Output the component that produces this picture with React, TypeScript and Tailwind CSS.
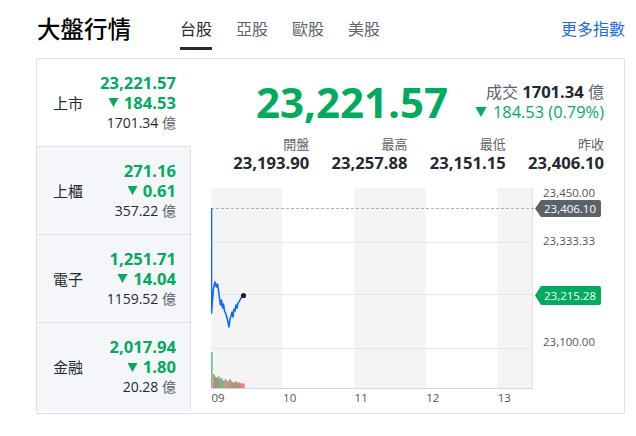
import React from "react";

const GREEN = "#00ab5e";

const Tri = ({ w, h }: { w: number; h: number }) => (
  <svg width={w} height={h} viewBox="0 0 10 9" className="block shrink-0">
    <path d="M0 0H10L5 9Z" fill={GREEN} />
  </svg>
);

const rows = [
  { name: "上市", v: "23,221.57", c: "184.53", amt: "1701.34", active: true },
  { name: "上櫃", v: "271.16", c: "0.61", amt: "357.22" },
  { name: "電子", v: "1,251.71", c: "14.04", amt: "1159.52" },
  { name: "金融", v: "2,017.94", c: "1.80", amt: "20.28" },
];

const stats = [
  { l: "開盤", v: "23,193.90" },
  { l: "最高", v: "23,257.88" },
  { l: "最低", v: "23,151.15" },
  { l: "昨收", v: "23,406.10" },
];

const pricePath =
  "M211.5 208 L211.5 313 L212.5 300 L213.5 288 L215 282 L216.5 287 L217.5 284 L218.5 290 L219.5 298 L220.5 305 L221.5 300 L222.5 308 L223.5 304 L224.5 311 L226 314 L227 318 L228 322 L229 327 L230 319 L231 316 L232 312 L233 317 L234 309 L235 311 L236 305 L237 308 L238 303 L239 302 L240 300 L241 298 L243 295.5";

const volTops = [374, 375, 377, 377, 378, 376, 379, 378, 378, 381, 380, 380, 379, 381, 382, 380, 379, 381, 382, 382, 383, 381, 382, 383, 382, 383, 383, 384, 383, 384];
const volCols = "rrgrggrgrggrrgrrgrrgrrgrrgrrrr";

const bands = [211, 282.6, 354.1, 425.7, 497.2, 533];
const hourLabels = ["09", "10", "11", "12", "13"];

function Chart() {
  const tf = "'Open Sans', sans-serif";
  return (
    <svg width={393} height={240} viewBox="211 173 393 240" className="block">
      {bands.slice(0, 5).map((x, i) => (
        <rect key={i} x={x} y={188} width={bands[i + 1] - x} height={200} fill={i % 2 === 0 ? "#f4f4f4" : "#ffffff"} />
      ))}
      {[242, 294, 348].map((y) => (
        <line key={y} x1={211} x2={533} y1={y + 0.5} y2={y + 0.5} stroke="#e6e6e6" strokeWidth={1} />
      ))}
      <line x1={211} x2={533} y1={388.5} y2={388.5} stroke="#d6d6d6" strokeWidth={1} />
      <line x1={532.5} x2={532.5} y1={188} y2={389} stroke="#e2e2e2" strokeWidth={1} />
      <line x1={211} x2={535} y1={208.5} y2={208.5} stroke="#b0b0b0" strokeWidth={1} strokeDasharray="3 2" />
      <rect x={211.2} y={352} width={1.4} height={36} fill="#4cbf86" />
      {volTops.map((t, i) => (
        <rect
          key={i}
          x={212.8 + i * 1.05}
          y={t}
          width={1.3}
          height={388 - t}
          fill={volCols[i] === "r" ? "#e86a6a" : "#2fb872"}
          opacity={0.85}
        />
      ))}
      <path d={pricePath} fill="none" stroke="#0f69ff" strokeWidth={1.6} strokeLinejoin="round" />
      <circle cx={243.5} cy={295.5} r={2.6} fill="#222" />
      <text x={543} y={197} fontSize={11.5} fill="#555" fontFamily={tf}>23,450.00</text>
      <text x={543} y={245} fontSize={11.5} fill="#555" fontFamily={tf}>23,333.33</text>
      <text x={543} y={346} fontSize={11.5} fill="#555" fontFamily={tf}>23,100.00</text>
      <path d="M535 208.5 L541 200 H599 Q601 200 601 202 V215 Q601 217 599 217 H541 Z" fill="#5b636a" />
      <text x={544} y={212.7} fontSize={11.5} fill="#fff" fontFamily={tf}>23,406.10</text>
      <path d="M535 295.5 L541 286 H599 Q601 286 601 288 V303 Q601 305 599 305 H541 Z" fill={GREEN} />
      <text x={544} y={299.7} fontSize={11.5} fill="#fff" fontFamily={tf}>23,215.28</text>
      {hourLabels.map((h, i) => (
        <text key={h} x={bands[i] + 0.5} y={402} fontSize={11.5} fill="#555" fontFamily={tf}>{h}</text>
      ))}
    </svg>
  );
}

export default function App() {
  return (
    <div className="w-[636px] h-[436px] bg-white pl-[36px] font-['Open_Sans','Noto_Sans_CJK_TC',sans-serif] text-[#232a31]">
      <div className="w-[589px]">
        <div className="flex items-start h-[58px]">
          <div className="w-[144px] pl-[1px] mt-[13px] text-[23.5px] leading-[32px] font-medium text-black">大盤行情</div>
          <div className="flex gap-[24px]">
            {["台股", "亞股", "歐股", "美股"].map((t, i) => (
              <div
                key={t}
                className={
                  i === 0
                    ? "pt-[17px] pb-[6px] leading-[24px] text-[16px] border-b-[3px] border-[#232a31] text-[#232a31]"
                    : "pt-[17px] pb-[6px] leading-[24px] text-[16px] border-b-[3px] border-transparent text-[#5b636a]"
                }
              >
                {t}
              </div>
            ))}
          </div>
          <div className="ml-auto mt-[17px] leading-[24px] text-[16px] text-[#1d6ee6]">更多指數</div>
        </div>

        <div className="flex w-[589px] h-[356px] border border-[#e0e0e0]">
          <div className="w-[154px] shrink-0 flex flex-col self-start">
            {rows.map((r, i) => (
              <div
                key={r.name}
                className={
                  (r.active ? "bg-white border-r-white " : "bg-[#f4f6f9] border-r-[#e0e0e0] ") +
                  (i < 3 ? "border-b border-b-[#e0e0e0] " : "") +
                  "h-[88px] border-r flex items-center justify-between pl-[16px] pr-[14px]"
                }
              >
                <div className="text-[15px] leading-[20px] text-[#232a31]">{r.name}</div>
                <div className="flex flex-col items-end">
                  <div className="text-[16.6px] leading-[20px] font-bold" style={{ color: GREEN }}>{r.v}</div>
                  <div className="flex items-center gap-[5px] text-[16.6px] leading-[20px] font-bold" style={{ color: GREEN }}>
                    <Tri w={11} h={9} />
                    <span>{r.c}</span>
                  </div>
                  <div className="text-[14px] leading-[20px] text-[#232a31]">
                    {r.amt} <span className="text-[#5b636a]">億</span>
                  </div>
                </div>
              </div>
            ))}
          </div>

          <div className="flex-1 flex flex-col pl-[20px] pr-[20px] pt-[22px]">
            <div className="flex justify-end items-center h-[42px]">
              <div className="text-[42px] leading-none font-bold mr-[27px]" style={{ color: GREEN }}>23,221.57</div>
              <div className="flex flex-col items-end text-[16px] leading-[20px]">
                <div className="text-[#5b636a]">
                  成交 <span className="font-bold text-[16.6px] text-[#232a31]">1701.34</span> 億
                </div>
                <div className="flex items-center gap-[6px] font-medium text-[16.4px]" style={{ color: GREEN }}>
                  <Tri w={12} h={10} />
                  <span>184.53 (0.79%)</span>
                </div>
              </div>
            </div>
            <div className="mt-[12px] grid grid-cols-4 text-right">
              {stats.map((s) => (
                <div key={s.l} className="flex flex-col items-end">
                  <div className="text-[13px] leading-[18px] text-[#5b636a]">{s.l}</div>
                  <div className="text-[16.6px] leading-[20px] font-bold text-[#232a31]">{s.v}</div>
                </div>
              ))}
            </div>
            <Chart />
          </div>
        </div>
      </div>
    </div>
  );
}
